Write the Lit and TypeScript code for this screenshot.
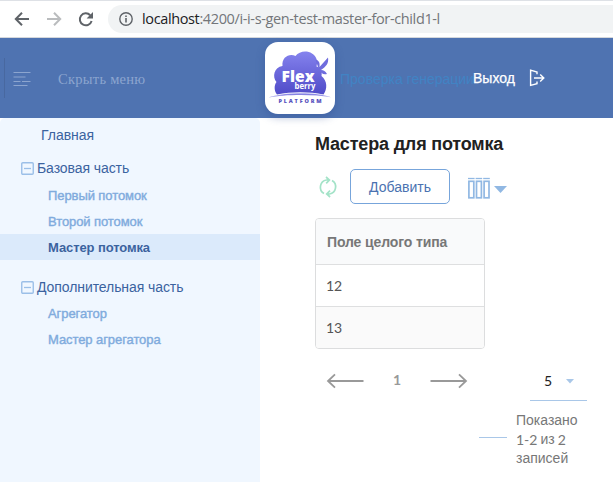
import { LitElement, html, css, svg } from "lit";
import { customElement, state } from "lit/decorators.js";
import { classMap } from "lit/directives/class-map.js";

const COLUMN_X = [0, 7.6, 15.2];

@customElement("browser-bar")
class BrowserBar extends LitElement {
  static styles = css`
    :host { display: flex; box-sizing: border-box; height: 38px; background: #fff; border-top: 1px solid #dee1e6; border-bottom: 1px solid #d5d8dc; }
    .nav { flex: none; width: 108px; height: 36px; }
    .address { flex: 1; height: 28px; margin-top: 4px; background: #f1f3f4; border-radius: 14px 0 0 14px; display: flex; align-items: center; overflow: hidden; }
    .info { flex: none; width: 14px; height: 14px; margin: 0 9px 0 11px; }
    .url { font: 14.5px/28px "Open Sans", "Noto Sans", sans-serif; letter-spacing: -0.37px; color: #73767a; white-space: nowrap; }
    .host { color: #202124; }
  `;
  render() {
    return html`
      <svg class="nav" viewBox="0 1 108 36" fill="none" stroke="#5f6368" stroke-width="2">
        <path d="M29 19H16M22 12.8L15.8 19l6.2 6.2" />
        <path d="M47 19h13M54 12.8l6.2 6.2-6.2 6.2" stroke="#babcbe" />
        <path d="M90.2 15.2A6 6 0 1 0 91.6 21" />
        <path d="M93 12v6.4h-6.4z" fill="#5f6368" stroke="none" />
      </svg>
      <div class="address">
        <svg class="info" viewBox="0 0 14 14" fill="none" stroke="#5f6368">
          <circle cx="7" cy="7" r="6.2" stroke-width="1.4" /><path d="M7 6v4.4M7 3.4v1.6" stroke-width="1.6" />
        </svg>
        <span class="url"><span class="host">localhost</span>:4200/i-i-s-gen-test-master-for-child1-l</span>
      </div>`;
  }
}

@customElement("app-header")
class AppHeader extends LitElement {
  static styles = css`
    :host { position: relative; z-index: 1; display: flex; align-items: center; height: 80px; background: #4f73b1; font-family: "Liberation Sans", Arial, sans-serif; white-space: nowrap; }
    .rail { width: 1px; height: 40px; margin-left: 4px; background: #4868a0; }
    .burger { width: 18px; height: 16px; margin: 1px 0 0 8px; }
    .toggle { width: 206px; margin: 2px 0 0 27px; font: 14.5px/18px "Liberation Serif", "Times New Roman", serif; color: #8ca5cf; letter-spacing: 0.27px; }
    .logo { flex: none; width: 70px; height: 72px; margin-left: 1px; border-radius: 13px; background: #fff; box-shadow: 0 3px 8px rgba(44, 75, 145, 0.4); }
    .title { width: 133px; margin: 1px 0 0 5px; font-size: 14px; line-height: 18px; color: #4183c4; }
    .exit { font-size: 14px; line-height: 18px; color: #fff; -webkit-text-stroke: 0.25px #fff; width: 42px; }
    .door { width: 16px; height: 18px; margin-left: 14px; }
    .mark { font: 800 15.5px "Open Sans", "Noto Sans", sans-serif; fill: #fff; }
    .sub { font: 700 8px "Open Sans", "Noto Sans", sans-serif; fill: #fff; }
    .platform { font: 800 5.5px "Open Sans", "Noto Sans", sans-serif; fill: #5751bd; }
  `;
  render() {
    return html`
      <div class="rail"></div>
      <svg class="burger" viewBox="0 0 18 16" stroke="#8ca5cf"><path d="M.5 1.5h17M.5 6h12M.5 10.5h7M9 10.5h8.5M.5 14.5h14" /></svg>
      <span class="toggle">Скрыть меню</span>
      <svg class="logo" viewBox="0 0 70 72">
        <defs><linearGradient id="cloud" x2="0" y2="1"><stop stop-color="#8583ee" /><stop offset="1" stop-color="#504bc8" /></linearGradient></defs>
        <path d="M12 52.500C9 49 9 43 11.500 40 7 35 9 25 17.500 24c-1-9 7-13 13-10 5-7 18-6 21 3 1 3 .5 5 0 7.500 4 1 6 5 5 9.500 6 5 6 13 2 18.500-14-3-32-3-46.500 0z" fill="url(#cloud)" />
        <path d="M54 28L50.500 17.500c4 1 4.500 4 4 7.500l8.500-9.500c1 6-2 9-7 12.500 3 0 4 1 6 4-4 1-6-1-8-4z" fill="#6f6ddd" />
        <path d="M3.500 55.500c14-5 47-6 62.500-.2C47 52 20 52.500 3.500 55.500z" fill="#7773df" stroke="#fff" stroke-width=".3" />
        <text class="mark" x="16.500" y="39.700" textLength="33" lengthAdjust="spacingAndGlyphs">Flex</text>
        <text class="sub" x="29.500" y="47" textLength="21" lengthAdjust="spacingAndGlyphs">berry</text>
        <text class="platform" x="13.500" y="61" textLength="43">PLATFORM</text>
      </svg>
      <span class="title">Проверка генерации</span>
      <span class="exit">Выход</span>
      <svg class="door" viewBox="0 0 16 18" fill="none" stroke="#fff" stroke-width="1.4"><path d="M8 5.2V3L1.6 1.2v15.2L8 14.7v-2.2M5 9h9.700M11.2 5.6L14.8 9l-3.6 3.4" /></svg>`;
  }
}

@customElement("side-menu")
class SideMenu extends LitElement {
  @state() active = "Мастер потомка";
  groups = [
    { title: "Базовая часть", items: ["Первый потомок", "Второй потомок", "Мастер потомка"] },
    { title: "Дополнительная часть", items: ["Агрегатор", "Мастер агрегатора"] },
  ];
  static styles = css`
    :host { display: block; width: 260px; background: #f0f7ff; border-radius: 5px 5px 0 0; font: 14px/26px "Liberation Sans", Arial, sans-serif; color: #3b639f; }
    .home { padding: 4px 0 0 41px; letter-spacing: -0.03px; }
    .group { margin-top: 7px; }
    .group + .group { margin-top: 14px; }
    .head { display: flex; align-items: center; gap: 3px; padding-left: 21px; height: 26px; letter-spacing: -0.08px; }
    .box { width: 13px; height: 13px; }
    .item { height: 26px; padding-left: 48px; font-size: 13px; line-height: 27px; color: #80abdd; letter-spacing: -0.08px; -webkit-text-stroke: 0.4px #80abdd; cursor: pointer; }
    .active { background: #dbeafb; color: #3b639f; font-weight: 700; letter-spacing: -0.1px; -webkit-text-stroke: 0; }
    .head + .item { margin-top: 1px; }
    .group + .group .head + .item { margin-top: 0; }
  `;
  render() {
    return html`
      <div class="home">Главная</div>
      ${this.groups.map((g) => html`
        <div class="group">
          <div class="head">
            <svg class="box" viewBox="0 0 13 13" fill="none" stroke="#9bbfe8"><rect x=".75" y=".75" width="11.5" height="11.5" rx="1" stroke-width="1.4" /><path d="M3 6.500h7" stroke-width="1.3" /></svg>
            <span>${g.title}</span>
          </div>
          ${g.items.map((i) => html`<div class=${classMap({ item: true, active: i === this.active })} @click=${() => (this.active = i)}>${i}</div>`)}
        </div>`)}`;
  }
}

@customElement("list-page")
class ListPage extends LitElement {
  rows = [12, 13];
  static styles = css`
    :host { display: block; flex: 1; padding-left: 55px; font-family: "Liberation Sans", Arial, sans-serif; white-space: nowrap; }
    h1 { margin: 15px 0 0; font-size: 18px; line-height: 22px; color: #212121; letter-spacing: -0.18px; }
    .tools { display: flex; align-items: center; height: 35px; margin-top: 14px; }
    .refresh { width: 20px; height: 22px; margin-left: 3px; }
    button { box-sizing: border-box; width: 100px; height: 35px; margin-left: 12px; padding: 0; border: 1px solid #77a5db; border-radius: 5px; background: #fff; color: #4b72b1; font: 14px "Liberation Sans", Arial, sans-serif; }
    .columns { width: 42px; height: 23px; margin: 3px 0 0 18px; }
    .grid { box-sizing: border-box; width: 170px; height: 131px; margin-top: 14px; border: 1px solid #dcddde; border-radius: 4px; overflow: hidden; }
    .cell { box-sizing: border-box; height: 42px; padding-left: 10px; border-top: 1px solid #dedfe0; font: 14px/41px Lato, sans-serif; color: #555; }
    .cell:nth-child(odd) { background: #fafafa; }
    .grid .title { height: 45px; padding-left: 11px; border: 0; background: #f9fafb; font: bold 14px/46px "Liberation Sans", Arial, sans-serif; color: #777; letter-spacing: -0.12px; }
    .pager { display: flex; align-items: flex-start; height: 52px; }
    .arrow { flex: none; width: 38px; height: 16px; margin: 24px 0 0 11px; }
    .page { flex: none; width: 38px; padding-top: 21px; margin-left: 14px; text-align: center; font: bold 14px/20px Lato, sans-serif; color: #999; }
    .next { margin-left: 14px; }
    .size { box-sizing: border-box; flex: none; display: flex; width: 57px; height: 41px; margin: 11px 0 0 62px; border-bottom: 1px solid #a9c7e8; padding: 12px 0 0 14px; font: 14px/18px Lato, sans-serif; color: #212121; }
    .caret { width: 8px; height: 5px; margin: 7px 0 0 14px; }
    .total { display: flex; align-items: center; margin: 10px 0 0 164px; gap: 9px; color: #777; }
    .line { height: 19px; font: 14px/19px "Liberation Sans", Arial, sans-serif; }
    .mixed { display: flex; gap: 3px; font-family: Lato, sans-serif; }
    .dash { width: 28px; height: 1px; background: #a9c7e8; margin-top: -4px; }
    .cyr { font-family: "Liberation Sans", Arial, sans-serif; }
  `;
  render() {
    return html`
      <h1>Мастера для потомка</h1>
      <div class="tools">
        <svg class="refresh" viewBox="0 0 20 22" fill="none" stroke="#a4e3c8" stroke-width="1.7">
          <path d="M6 17.5A7.3 7.3 0 0 1 8.5 4H11M8 1l3.4 3L8.2 7.3M14 4.5A7.3 7.3 0 0 1 11.5 18H9M12 14.7L8.7 18l3.4 3" />
        </svg>
        <button>Добавить</button>
        <svg class="columns" viewBox="0 0 42 23" fill="none" stroke="#91b8e3">
          ${COLUMN_X.map((x) => svg`<path d="M${x} 1.5h6.6" stroke-width="1.3" /><rect x=${x + 0.9} y="4.3" width="4.9" height="16.500" stroke-width="1.700" />`)}
          <path d="M26 9h13l-6.500 7z" fill="#91b8e3" stroke="none" />
        </svg>
      </div>
      <div class="grid">
        <div class="cell title">Поле целого типа</div>
        ${this.rows.map((r) => html`<div class="cell">${r}</div>`)}
      </div>
      <div class="pager">
        <svg class="arrow" viewBox="0 0 38 16" fill="none" stroke="#999" stroke-width="1.8"><path d="M37.500 8H2M9 1.3L2 8l7 6.7" /></svg>
        <span class="page">1</span>
        <svg class="arrow next" viewBox="0 0 38 16" fill="none" stroke="#999" stroke-width="1.8"><path d="M.5 8H36M29 1.3L36 8l-7 6.7" /></svg>
        <div class="size">5<svg class="caret" viewBox="0 0 8 5"><path d="M0 0h8L4 4.5z" fill="#a9c7e8" /></svg></div>
      </div>
      <div class="total">
        <div class="dash"></div>
        <div>
          <div class="line">Показано</div>
          <div class="line mixed"><span>1-2</span><span class="cyr">из</span><span>2</span></div>
          <div class="line">записей</div>
        </div>
      </div>`;
  }
}

@customElement("app-root")
class AppRoot extends LitElement {
  static styles = css`
    :host { display: flex; flex-direction: column; width: 613px; height: 482px; background: #fff; overflow: hidden; }
    .body { display: flex; flex: 1; }
  `;
  render() {
    return html`<browser-bar></browser-bar><app-header></app-header>
      <div class="body"><side-menu></side-menu><list-page></list-page></div>`;
  }
}
